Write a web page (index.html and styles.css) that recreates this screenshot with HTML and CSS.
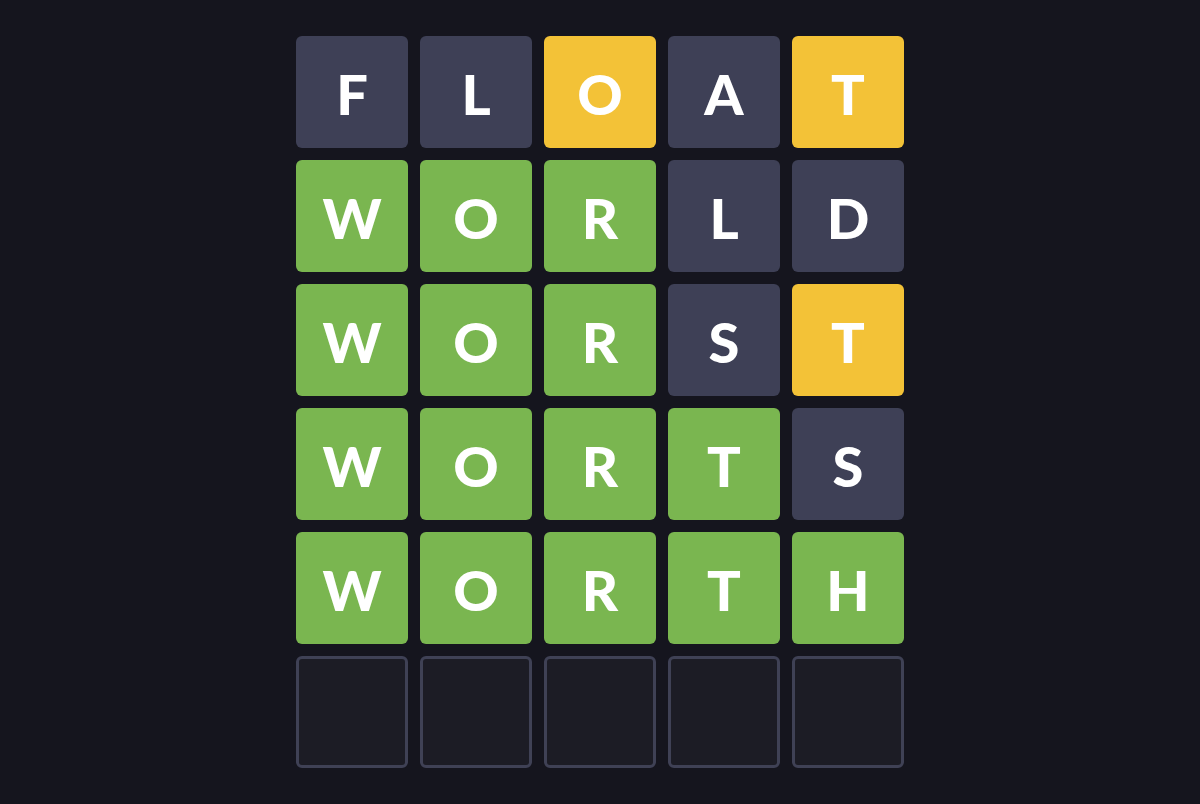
FILE: index.html
```html
<!DOCTYPE html>
<html>
<head>
<meta charset="utf-8">
<link rel="stylesheet" href="styles.css">
</head>
<body>
<div class="board">
  <div class="tile absent">F</div><div class="tile absent">L</div><div class="tile present">O</div><div class="tile absent">A</div><div class="tile present">T</div>
  <div class="tile correct">W</div><div class="tile correct">O</div><div class="tile correct">R</div><div class="tile absent">L</div><div class="tile absent">D</div>
  <div class="tile correct">W</div><div class="tile correct">O</div><div class="tile correct">R</div><div class="tile absent">S</div><div class="tile present">T</div>
  <div class="tile correct">W</div><div class="tile correct">O</div><div class="tile correct">R</div><div class="tile correct">T</div><div class="tile absent">S</div>
  <div class="tile correct">W</div><div class="tile correct">O</div><div class="tile correct">R</div><div class="tile correct">T</div><div class="tile correct">H</div>
  <div class="tile empty"></div><div class="tile empty"></div><div class="tile empty"></div><div class="tile empty"></div><div class="tile empty"></div>
</div>
</body>
</html>
```
FILE: styles.css
```css
html, body {
  margin: 0;
  padding: 0;
  background: #15151e;
  height: 100%;
}
body {
  display: flex;
  justify-content: center;
  align-items: flex-start;
  padding-top: 36px;
  box-sizing: border-box;
}
.board {
  display: grid;
  grid-template-columns: repeat(5, 112px);
  grid-auto-rows: 112px;
  gap: 12px;
}
.tile {
  border-radius: 6px;
  display: flex;
  align-items: center;
  justify-content: center;
  color: #ffffff;
  font-family: "Lato", "DejaVu Sans", sans-serif;
  font-weight: 900;
  font-size: 56px;
  line-height: 1;
  padding-top: 3px;
  box-sizing: border-box;
}
.absent { background: #3e4056; }
.present { background: #f3c237; }
.correct { background: #7ab650; }
.empty {
  background: #1c1c25;
  border: 3px solid #3f4155;
  padding-top: 0;
}
```
